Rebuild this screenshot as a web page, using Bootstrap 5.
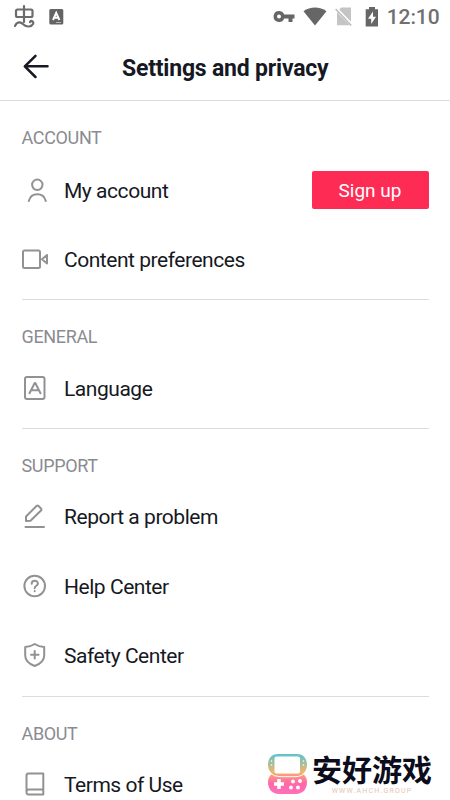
<!DOCTYPE html>
<html lang="en">
<head>
<meta charset="utf-8">
<meta name="viewport" content="width=device-width, initial-scale=1">
<title>Settings and privacy</title>
<link href="https://cdn.jsdelivr.net/npm/bootstrap@5.3.0/dist/css/bootstrap.min.css" rel="stylesheet">
<style>
body{font-family:Roboto,"Noto Sans CJK SC",sans-serif;color:#161823;height:800px;overflow:hidden;background:#fff}
svg{display:block;flex:none}
.status{height:33px;color:#666;padding:0 10.5px 0 13px}
.app-mark{margin-left:13px}
.sys-icons{gap:8px}
.clock{font-size:21px;font-weight:500;line-height:34px;letter-spacing:-.1px;color:#707070}
.topbar{height:68px;border-bottom:1px solid #dcdcdc;padding-left:22px}
.topbar h1{font-size:23px;font-weight:700;line-height:64px;padding-top:4px;margin-left:73px;letter-spacing:-.2px}
.group{padding:0 21.5px}
.group h2{font-size:18px;font-weight:400;color:#8a8b91;line-height:34px;padding-top:20px;margin:0;letter-spacing:-.35px}
.item{height:69.4px;font-size:21px;line-height:28px;letter-spacing:-.46px;padding-top:1px}
.item svg{width:28px;height:28px;margin-right:15px;margin-left:-.5px;fill:none;stroke:#929295;stroke-width:2;stroke-linejoin:round;stroke-linecap:round}
.rule{height:1px;background:#dcdcdc;margin-top:5px}
.group.support h2{line-height:33px}
.group.support .rule{margin-top:5.2px}
.signup{background:#fe2c55;color:#fff;width:117px;height:38px;border-radius:2px;font-size:19px;line-height:39px;padding:0;border:0;margin-bottom:1px}
.group:first-child .item:nth-of-type(1){padding-top:2px}
.brand{left:266px;top:751px}
.brand-name{font-size:30px;font-weight:700;line-height:34px;color:#0c0c1c;font-family:"Noto Sans CJK SC",sans-serif}
.brand-url{font-size:7px;line-height:8px;letter-spacing:1.2px;color:#e5c4b4;padding-top:2px}
</style>
<script src="https://cdn.jsdelivr.net/npm/bootstrap@5.3.0/dist/js/bootstrap.bundle.min.js"></script>
</head>
<body>
<div class="status d-flex align-items-center justify-content-between">
  <div class="d-flex align-items-center">
    <svg width="23" height="24" viewBox="0 0 23 24" fill="none" stroke="#6c6c6c" stroke-width="2.200" stroke-linecap="round" stroke-linejoin="round"><rect x="3" y="4.500" width="16.500" height="7.500" rx="1.500"/><path d="M11 1.200V17M2 21C4 16.500 7.500 16.500 10.500 19.500s8 2.500 9.500-.5c1-2.500-1.500-4-3-2"/></svg>
    <svg class="app-mark" width="15" height="16" viewBox="0 0 15 16"><rect width="14" height="15.500" x=".3" rx="1.500" fill="#646464"/><path d="M4 11 7.200 3.800 10.400 11M5.200 8.700h4" fill="none" stroke="#fff" stroke-width="1.900"/><path d="M7 13.500h5" stroke="#ccc" stroke-width=".8"/></svg>
  </div>
  <div class="sys-icons d-flex align-items-center">
    <svg width="22" height="14" viewBox="0 0 22 14"><path fill="#666" fill-rule="evenodd" d="M6 1a5.500 5.500 0 0 1 5.200 3.600H21.500V8.500H19.500V12h-4V8.500h-4.300A5.500 5.500 0 1 1 6 1zM6 4.500a2 2 0 1 0 0 4 2 2 0 0 0 0-4z"/></svg>
    <svg width="24" height="20" viewBox="0 0 24 20"><path fill="#666" d="M.5 4.200C7-.8 17-.8 23.500 4.200L12 18.500z"/></svg>
    <svg width="18" height="20" viewBox="0 0 18 20"><path fill="#c4c4c4" d="M6 .5H16V14.700L4.200 2.800zM2 5 14.800 18.200H2z"/><path d="M.8 1.500 16.800 18" stroke="#fff" stroke-width="2.400"/><path d="M.6 2 16.300 18.400" stroke="#bbb" stroke-width="1.500"/></svg>
    <svg class="ms-1" width="14" height="20" viewBox="0 0 14 20"><path fill="#666" d="M4 0h6v2.300h3V19.500H.7V2.300H4z"/><path fill="#fff" d="M8 4.500 3 11.700h3.200V17l4.800-7.200H8z"/></svg>
    <span class="clock">12:10</span>
  </div>
</div>
<header class="topbar d-flex align-items-center">
  <svg width="27" height="26" viewBox="0 0 27 26" fill="none" stroke="#161823" stroke-width="2.500" stroke-linecap="round" stroke-linejoin="round"><path d="M13.500 1.800 2.800 12.300l10.700 10.700M3 12.300h22.500"/></svg>
  <h1 class="mb-0 text-nowrap">Settings and privacy</h1>
</header>
<main>
<section class="group">
  <h2>ACCOUNT</h2>
  <div class="item d-flex align-items-center"><svg viewBox="0 0 28 28"><circle cx="16.300" cy="7.800" r="5.200"/><path d="M7.800 24C9 19.500 12 17.300 16.300 17.300S23.600 19.500 24.800 24"/></svg><span>My account</span><button class="btn signup ms-auto">Sign up</button></div>
  <div class="item d-flex align-items-center"><svg viewBox="0 0 28 28"><rect x="2" y="4.500" width="17" height="17.500" rx="1.500"/><path d="M26 9v8.500l-5-4.200z"/></svg><span>Content preferences</span></div>
  <div class="rule"></div>
</section>
<section class="group">
  <h2>GENERAL</h2>
  <div class="item d-flex align-items-center"><svg viewBox="0 0 28 28"><rect x="4" y="2" width="19.500" height="22" rx="2"/><path d="M8.500 18.300 13.700 8h.6l5.200 10.300M10.500 15.300h7"/></svg><span>Language</span></div>
  <div class="rule"></div>
</section>
<section class="group support">
  <h2>SUPPORT</h2>
  <div class="item d-flex align-items-center"><svg viewBox="0 0 28 28"><path d="m5 13.500 10.500-10.500q1-1 2 0l2.500 2.500q1 1 0 2L9.500 17.800 5 18zM4.500 24h18.500"/></svg><span>Report a problem</span></div>
  <div class="item d-flex align-items-center"><svg viewBox="0 0 28 28"><circle cx="13.700" cy="13" r="10.300"/><path d="M10.700 10.800c0-4 6.200-4 6.200-.3 0 2.400-3.200 2.200-3.200 4.700M13.700 18v.3"/></svg><span>Help Center</span></div>
  <div class="item d-flex align-items-center"><svg viewBox="0 0 28 28"><path d="M13.700 2c3 2 6 2.700 9.500 2.900v8.600c0 5-4 8.500-9.500 10.500-5.500-2-9.500-5.500-9.500-10.500V4.900C7.700 4.700 10.700 4 13.700 2zM13.700 9v7.500M10 12.800h7.500"/></svg><span>Safety Center</span></div>
  <div class="rule"></div>
</section>
<section class="group">
  <h2>ABOUT</h2>
  <div class="item d-flex align-items-center pt-0"><svg viewBox="0 0 28 28"><path d="M22.300 18.500H7.500a2.300 2.300 0 0 0-2 2.300V4.500a2 2 0 0 1 2-2h14.800V23.500H7.500a2.300 2.300 0 0 1-2-2.300"/></svg><span>Terms of Use</span></div>
</section>
</main>
<div class="brand position-absolute d-flex">
  <svg width="42" height="44" viewBox="0 0 42 44">
    <defs><linearGradient id="shell" x1="0" y1="0" x2="0" y2="1"><stop offset="0" stop-color="#5cc5cc"/><stop offset=".48" stop-color="#f5b765"/><stop offset=".52" stop-color="#fa9b82"/><stop offset=".75" stop-color="#ff67a8"/><stop offset="1" stop-color="#ff70bd"/></linearGradient></defs>
    <path fill="url(#shell)" d="M12 3h19c7 0 10 5 10 11 0 4-2 7-4 9 3 2 4 5 4 8 0 7-4 12-11 12H13C6 43 2 38 2 31c0-3 1-6 4-8-2-2-4-5-4-9C2 8 5 3 12 3z"/>
    <rect x="8.500" y="5.500" width="25.500" height="17" rx="2" fill="#fff"/><path d="M3 21Q8 26 14 25.700H29Q36 25.700 40 21" fill="none" stroke="#fff" stroke-width="1"/>
    <path d="M13 28v10M8 33h10" stroke="#fff" stroke-width="3.500"/><g fill="#fff"><circle cx="27" cy="30.500" r="1.900"/><circle cx="34" cy="30" r="1.900"/><circle cx="25" cy="36.500" r="1.900"/><circle cx="32" cy="36.500" r="1.900"/><circle cx="5.500" cy="10" r=".8"/><circle cx="5.500" cy="14" r=".8"/><circle cx="37.500" cy="10" r=".8"/><circle cx="37.500" cy="14" r=".8"/></g>
  </svg>
  <div class="text-nowrap ms-1"><div class="brand-name">安好游戏</div><div class="brand-url text-center">WWW.AHCH.GROUP</div></div>
</div>
</body>
</html>
